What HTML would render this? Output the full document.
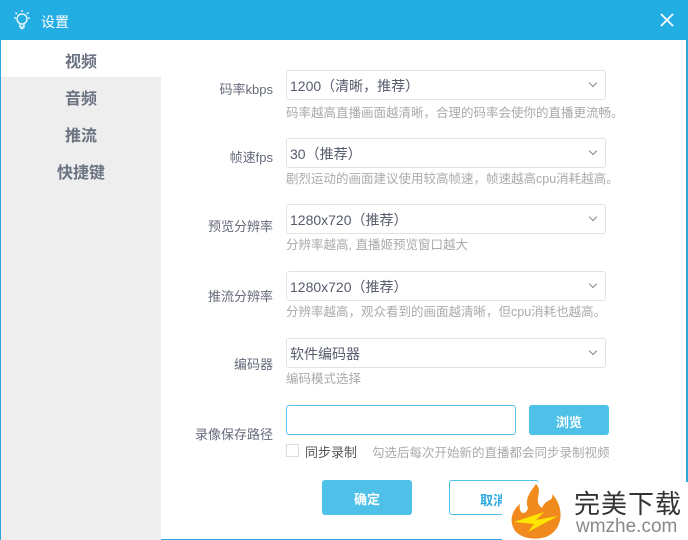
<!DOCTYPE html>
<html><head><meta charset="utf-8"><style>
*{margin:0;padding:0;box-sizing:border-box}
body{width:688px;height:540px;overflow:hidden;background:#fff;font-family:"Liberation Sans","Noto Sans CJK SC",sans-serif;position:relative}
.title{position:absolute;left:0;top:0;width:688px;height:40px;background:#22ade3;color:#fff;font-size:14px}
.title span{position:absolute;left:41px;top:12px}
.frame{position:absolute;left:0;top:40px;width:688px;height:500px;border-left:1px solid #2aa8de;border-right:2px solid #2aa8de;border-bottom:1px solid #2aa8de}
.side{position:absolute;left:1px;top:40px;width:160px;height:500px;background:#eeeeee}
.side div{position:absolute;left:0;width:160px;text-align:center;font-size:16px;font-weight:bold;color:#6b7280}
.lab{position:absolute;right:415px;font-size:13px;color:#666a7a;text-align:right;white-space:nowrap}
.sel{position:absolute;left:286px;width:320px;height:30px;border:1px solid #e3e3e3;border-radius:3px;font-size:14px;color:#555b6b;padding:5px 3px}
.sel:after{content:"";position:absolute;right:9px;top:9px;width:5px;height:5px;border-right:1px solid #888;border-bottom:1px solid #888;transform:rotate(45deg)}
.hint{position:absolute;left:286px;font-size:12.5px;color:#aaaaaa;white-space:nowrap}
.btn{position:absolute;border-radius:3px;font-size:13px;font-weight:bold;text-align:center}
</style></head><body>
<div class="title">
<svg style="position:absolute;left:11px;top:9px" width="22" height="22" viewBox="0 0 22 22" fill="none" stroke="#fff" stroke-width="1.3"><circle cx="11" cy="10" r="5"/><path d="M9 15v3h4v-3M9.5 19.5h3M11 1v2M3 9h2M17 9h2M4.5 3.5l1.5 1.5M17.5 3.5L16 5"/></svg>
<span>设置</span>
<svg style="position:absolute;left:660px;top:13px" width="14" height="14" viewBox="0 0 14 14" stroke="#fff" stroke-width="1.8"><path d="M1 1l12 12M13 1L1 13"/></svg>
</div>
<div class="frame"></div>
<div class="side">
<div style="top:0;height:37px;background:#fff;padding-top:8px;color:#6b7280">视频</div>
<div style="top:45px">音频</div>
<div style="top:82px">推流</div>
<div style="top:119px">快捷键</div>
</div>
<div class="lab" style="top:79px">码率kbps</div>
<div class="sel" style="top:70px">1200（清晰，推荐）</div>
<div class="hint" style="top:102px">码率越高直播画面越清晰，合理的码率会使你的直播更流畅。</div>
<div class="lab" style="top:147px">帧速fps</div>
<div class="sel" style="top:138px">30（推荐）</div>
<div class="hint" style="top:168px">剧烈运动的画面建议使用较高帧速，帧速越高cpu消耗越高。</div>
<div class="lab" style="top:216px">预览分辨率</div>
<div class="sel" style="top:204px">1280x720（推荐）</div>
<div class="hint" style="top:234px">分辨率越高, 直播姬预览窗口越大</div>
<div class="lab" style="top:286px">推流分辨率</div>
<div class="sel" style="top:271px">1280x720（推荐）</div>
<div class="hint" style="top:301px">分辨率越高，观众看到的画面越清晰，但cpu消耗也越高。</div>
<div class="lab" style="top:354px">编码器</div>
<div class="sel" style="top:338px">软件编码器</div>
<div class="hint" style="top:368px">编码模式选择</div>
<div class="lab" style="top:424px">录像保存路径</div>
<div style="position:absolute;left:286px;top:405px;width:230px;height:30px;border:1px solid #5cc1e8;border-radius:3px"></div>
<div class="btn" style="left:529px;top:405px;width:80px;height:30px;background:#4fc1e9;color:#fff;padding-top:7px">浏览</div>
<div style="position:absolute;left:286px;top:444px;width:13px;height:13px;border:1px solid #ddd"></div>
<div style="position:absolute;left:305px;top:442px;font-size:13px;color:#555">同步录制</div>
<div class="hint" style="left:372px;top:442px">勾选后每次开始新的直播都会同步录制视频</div>
<div class="btn" style="left:322px;top:480px;width:90px;height:35px;background:#4fc1e9;color:#fff;padding-top:9px">确定</div>
<div class="btn" style="left:449px;top:480px;width:90px;height:35px;border:1px solid #4fc1e9;color:#2aa8de;padding-top:9px;text-align:left;padding-left:30px">取消</div>
<div style="position:absolute;left:502px;top:482px;width:186px;height:58px;background:#fff"></div>
<svg style="position:absolute;left:506px;top:482px" width="62" height="58" viewBox="0 0 62 58"><path d="M30 2C38 10 26 18 36 26C40 16 48 20 46 12C58 24 58 46 42 54C34 58 18 58 10 50C2 40 6 28 14 22C12 32 20 34 22 26C18 16 26 8 30 2Z" fill="#f08a1c"/><path d="M8 40L38 30L30 38L52 34L22 50L28 42Z" fill="#ffe600"/></svg>
<div style="position:absolute;left:574px;top:484px;font-size:26px;color:#333;letter-spacing:1px">完美下载</div>
<div style="position:absolute;left:576px;top:516px;font-size:19px;color:#888">wmzhe.com</div>
</body></html>
